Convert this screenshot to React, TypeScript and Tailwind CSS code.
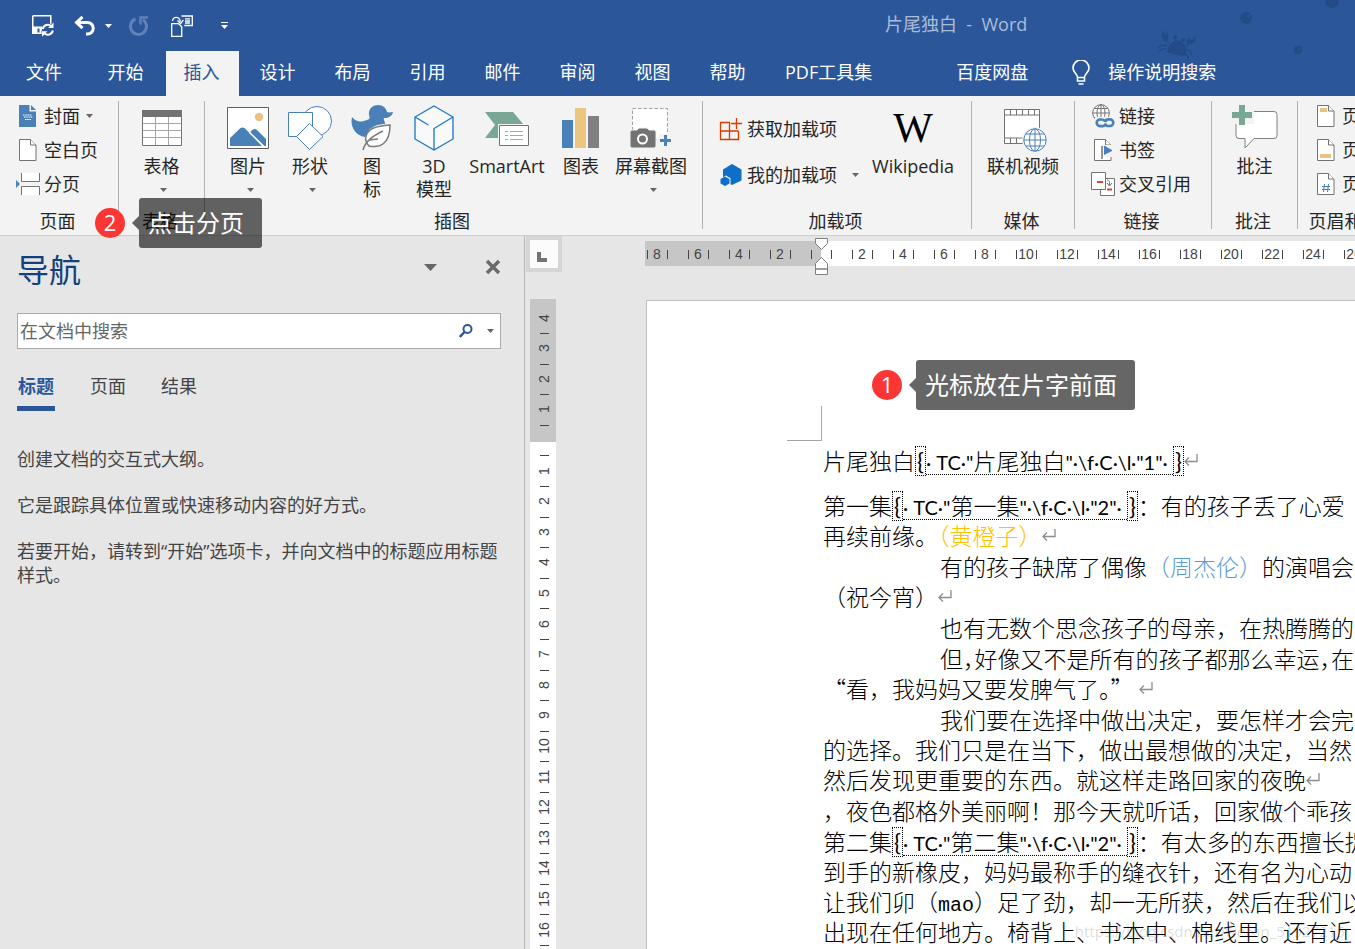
import type { ReactNode } from "react";
import clsx from "clsx";

const Caret = ({ className }: { className?: string }) => (
  <svg viewBox="0 0 7 4" className={clsx("h-1 w-[7px] shrink-0", className)} fill="currentColor">
    <path d="M0 0h7L3.5 4z" />
  </svg>
);

/* ---------- Quick access toolbar icons ---------- */

const SaveIcon = () => (
  <svg width="22" height="22" viewBox="0 0 22 22" fill="none" stroke="#fff">
    <path d="M.75.75h18v8M.75.75v17.5h9" strokeWidth="1.5" />
    <path d="M1 11.5h9v3l-1 4H1z" fill="#fff" stroke="none" />
    <path d="M5.5 13.5h2v4h-2z" fill="#2b579a" stroke="none" />
    <path d="M10.8 14a5 5 0 0 1 8.6-2.6M20.8 15.5a5 5 0 0 1-8.6 2.6" strokeWidth="2" />
    <path d="M21.5 7.5v5.5H16zM10 21.7v-5.5h5.5z" fill="#fff" stroke="none" />
  </svg>
);

const UndoIcon = () => (
  <svg width="22" height="20" viewBox="0 0 22 20" fill="none" stroke="#fff" strokeWidth="3">
    <path d="M2 6.5h11.5a5.7 5.7 0 0 1 0 11.5H12" />
    <path d="M8.5.8 2.5 6.5l6 5.7" />
  </svg>
);

const RedoIcon = () => (
  <svg width="21" height="20" viewBox="0 0 21 20" fill="none" stroke="#5f82b8" strokeWidth="3">
    <path d="M7.5 3A8 8 0 1 0 15 3.800" />
    <path d="M12.5 8.5V1.5H20" strokeWidth="2.5" />
  </svg>
);

const PasteIcon = () => (
  <svg width="22" height="22" viewBox="0 0 22 22" fill="none" stroke="#fff" strokeWidth="1.3">
    <path d="M.7 8.7h7l3 3v9.6H.7zM10.5 1H21.3v9.5h-8" />
    <path d="M14 3.8h5M14 6h5M14 8h5M1.5 6C2 1.5 8 .5 9.5 6.5M6.5 5.5l3.2 3 2.6-3.5" />
  </svg>
);

const BulbIcon = () => (
  <svg width="18" height="25" viewBox="0 0 18 25" fill="none" stroke="#fff" strokeWidth="1.6">
    <path d="M5.5 17.5c0-4-4.5-4.7-4.5-9.5a8 8 0 0 1 16 0c0 4.8-4.5 5.5-4.5 9.5zM5.5 17v4h7v-4M6.5 24h5" />
  </svg>
);

const Decoration = () => (
  <svg width="210" height="64" viewBox="0 0 210 64" fill="#234b86" className="absolute right-0 top-0">
    <circle cx="101" cy="18" r="6" />
    <circle cx="103.5" cy="16" r="1.5" fill="#2b579a" />
    <circle cx="153" cy="50" r="4" />
    <circle cx="154.5" cy="49" r="1" fill="#2b579a" />
    <circle cx="187" cy="1" r="7" />
    <path d="M22 52c2-10 8-13 13-11s8 8 5 15c-6 0-12-2-18-4z" />
    <path d="M23 43c-6-3-8-7-5-13l2 5 3-3c1 5 0 7-1 9l4 3zM42 45c7 0 10-4 8-10l-3 5-4-2c-2 4-2 6 0 8l-4 3z" />
    <circle cx="30" cy="37" r="2" />
    <circle cx="38" cy="40" r="2" />
    <path d="M22 46q-6-2-9 2M21 49q-5-1-7 3M40 50q6 0 7 5M39 53q5 2 4 7M31 42l-1-5M36 43l2-3" stroke="#234b86" strokeWidth="1.5" fill="none" />
  </svg>
);

/* ---------- Ribbon icons ---------- */

const PageShape = ({ children }: { children?: ReactNode }) => (
  <svg width="18" height="22" viewBox="0 0 18 22" fill="#fff" stroke="#737373">
    <path d="M.5.5h11l5.5 5.5v15.5H.5z" />
    <path d="M11.5.5V6H17" />
    {children}
  </svg>
);

const CoverIcon = () => (
  <svg width="18" height="22" viewBox="0 0 18 22" fill="#4a80b8">
    <path d="M0 0h10.5v6.5H17V22H0zM12 0l5 5h-5z" />
    <path d="M4 10h9M5 12h9M6 14.5h6" stroke="#fff" strokeWidth="1.2" strokeDasharray="1.5 .7" />
  </svg>
);

const BreakIcon = () => (
  <svg width="24" height="22" viewBox="0 0 24 22" fill="#fff" stroke="#737373">
    <path d="M5.5 0v8.5h18V0M5.5 22v-8.5h18V22" />
    <path d="M0 7l4 4-4 4z" fill="#4a80b8" stroke="none" />
  </svg>
);

const TableIcon = () => (
  <svg width="40" height="36" viewBox="0 0 40 36" fill="#fff">
    <path d="M.5.5h39v35H.5z" stroke="#737373" />
    <path d="M0 0h40v7H0z" fill="#737373" />
    <path d="M13.5 7v28M26.5 7v28M1 13.5h38M1 20.5h38M1 27.5h38" stroke="#a6a6a6" />
  </svg>
);

const PictureIcon = () => (
  <svg width="42" height="42" viewBox="0 0 42 42">
    <path d="M.5.5h41v41H.5z" fill="#fff" stroke="#5f5f5f" />
    <circle cx="32" cy="10" r="4.2" fill="#e9c282" />
    <path d="M3 39v-8l10.5-10q2-1 4 0L35 39z" fill="#4a80b8" />
    <path d="M23 25l3-2.5q2-1 4 .5l9 9v7h-2z" fill="#4a80b8" />
    <path d="M22.5 25.5L37 39.5" stroke="#fff" strokeWidth="1.2" />
  </svg>
);

const ShapesIcon = () => (
  <svg width="44" height="44" viewBox="0 0 44 44" fill="#fff" stroke="#4a80b8">
    <circle cx="29" cy="15" r="14.5" />
    <path d="M.5 6.5h24v24H.5z" />
    <path d="M21.5 17.5L35 30.5 21.5 43.5 8.5 30.5z" />
  </svg>
);

const DuckIcon = () => (
  <svg width="42" height="46" viewBox="0 0 42 46" fill="#4a80b8">
    <path d="M1 12c5 6 10 5 15 3 3-1 3-2 2-5C17 4 22 0 27 0c5 0 8 3 9 7 2 1 4 0 6 0-1 4-4 6-9 6-1 1 1 3 1 6-6 0-12 2-16 6-3 4-3 6-4 7C4 30-1 22 1 12z" />
    <path d="M39 20c-15 1-22 4-24 11-1 4 0 7 3 10 10 2 21-1 21-21z" fill="#fff" stroke="#7a7a7a" strokeWidth="1.5" />
    <path d="M12 45c2-8 9-14 20-19M18 35l9-1" stroke="#7a7a7a" strokeWidth="1.5" fill="none" />
  </svg>
);

const CubeIcon = () => (
  <svg width="40" height="46" viewBox="0 0 40 46" fill="#fff" fillOpacity=".5" stroke="#1a76c9" strokeWidth="1.3">
    <path d="M20 1L39 12v22L20 45 1 34V12z" />
    <path d="M1 12l13.5 8M20 45V23.5L39 12" fill="none" />
  </svg>
);

const SmartArtIcon = () => (
  <svg width="44" height="36" viewBox="0 0 44 36">
    <path d="M0 2h28l11 13L28 28H0l10-13z" fill="#78a796" />
    <path d="M13 14h31v22H13z" fill="#f3f3f3" />
    <path d="M14.5 15.5h29v20h-29z" fill="#fff" stroke="#737373" />
    <path d="M20 21.5h3M25 21.5h13M20 25.5h3M25 25.5h13M20 29.5h3M25 29.5h13" stroke="#a6a6a6" />
  </svg>
);

const ChartIcon = () => (
  <svg width="38" height="40" viewBox="0 0 38 40">
    <path d="M0 12h11v28H0z" fill="#4a80b8" />
    <path d="M13 0h11v40H13z" fill="#ecc67f" />
    <path d="M26 8h11v32H26z" fill="#808080" />
  </svg>
);

const ScreenshotIcon = () => (
  <svg width="42" height="42" viewBox="0 0 42 42">
    <path d="M2.5 1.5h35v31h-35z" fill="#fff" stroke="#a0a0a0" strokeDasharray="3.5 2" />
    <path d="M0 25q0-2 2-2h5l2-2h8l2 2h5q2 0 2 2v14q0 2-2 2H2q-2 0-2-2z" fill="#737373" stroke="#f3f3f3" />
    <circle cx="12.5" cy="32" r="4.5" fill="none" stroke="#fff" strokeWidth="2" />
    <path d="M29 27h13v12H29z" fill="#f3f3f3" />
    <path d="M30 33.5h11M35.5 28v11" stroke="#4a80b8" strokeWidth="3" />
  </svg>
);

const GetAddinsIcon = () => (
  <svg width="24" height="24" viewBox="0 0 24 24" fill="none" stroke="#d83b01" strokeWidth="1.3">
    <path d="M11 5.5H1.5v17h18V14M1.5 14h18M10.5 5.5v17M12 6.5h11M17.5 1v11" />
  </svg>
);

const MyAddinsIcon = () => (
  <svg width="22" height="22" viewBox="0 0 22 22" fill="#0f6fc6">
    <path d="M12 0l9.5 5.5v11L12 21l-1.5-.7v-6L6 11.5l-3 1.7V5.5z" />
    <path d="M5 12.5l4.5 2.5v4.5L5 22 .5 19.5V15z" />
  </svg>
);

const VideoIcon = () => (
  <svg width="48" height="50" viewBox="-4 -6 48 50" fill="#fff" stroke="#737373">
    <path d="M1.5.5h35v34h-35z" />
    <path d="M1.5 6h35M1.5 29h35M7.5.5V6M13.5.5V6M19.5.5V6M25.5.5V6M31.5.5V6M7.5 29v5.5M13.5 29v5.5M19.5 29v5.5" />
    <circle cx="32" cy="31" r="13" fill="#f3f3f3" stroke="none" />
    <g stroke="#4a80b8">
      <circle cx="32" cy="31" r="11.2" />
      <ellipse cx="32" cy="31" rx="5.5" ry="11.2" />
      <path d="M32 20v22M21 31h22M23 25h18M23 37h18" />
    </g>
  </svg>
);

const LinkIcon = () => (
  <svg width="24" height="24" viewBox="0 0 24 24" fill="none" stroke="#737373">
    <circle cx="10" cy="9" r="8.3" fill="#fff" />
    <ellipse cx="10" cy="9" rx="4" ry="8.3" />
    <path d="M10 .7v16.6M1.7 9h16.6M3 4.5h14M3 13.5h14" />
    <path d="M4 13h20v11H4z" fill="#f3f3f3" stroke="none" />
    <g stroke="#4a80b8" strokeWidth="2.6">
      <path d="M14 17.5q-1-2-3-2H9a3.3 3.3 0 0 0 0 6.6h3q2 0 3-2.5M14 20q1 2 3 2h2a3.3 3.3 0 0 0 0-6.6h-2q-2 0-3 2.5" />
    </g>
  </svg>
);

const BookmarkIcon = () => (
  <PageShape>
    <path d="M8 6h11v12H8z" fill="#f3f3f3" stroke="none" />
    <path d="M8 7v13" strokeWidth="1.5" />
    <path d="M10 6.5l9 5-9 4.5z" fill="#4a80b8" stroke="none" />
  </PageShape>
);

const CrossRefIcon = () => (
  <svg width="24" height="24" viewBox="0 0 24 24" fill="#fff" stroke="#737373">
    <path d="M9.5 6.5h14v17h-14z" />
    <path d="M.5.5h14v17H.5z" />
    <path d="M6 10h6M16 17.5h5" stroke="#d24726" strokeWidth="2" />
    <path d="M16 8q3 0 2.5 5M16 11l2.5 3 2.5-3" fill="none" />
  </svg>
);

const CommentIcon = () => (
  <svg width="46" height="46" viewBox="0 0 46 46">
    <path d="M7 6.5h35q3 0 3 3v21q0 3-3 3H22L13 43v-9.5H7q-3 0-3-3V9.5q0-3 3-3z" fill="#fff" stroke="#808080" />
    <path d="M0 3h22v16H0z" fill="#f3f3f3" />
    <path d="M0 10h20M10 0v20" stroke="#78a796" strokeWidth="6" />
  </svg>
);

/* ---------- Ribbon building blocks ---------- */

const Group = ({ label, className, children }: { label: string; className: string; children: ReactNode }) => (
  <section className={clsx("flex h-32 shrink-0 flex-col border-r border-[#b1b1b1]", className)}>
    <div className="flex h-28">{children}</div>
    <h2 className="h-4 pr-[3px] text-center leading-4 whitespace-nowrap">{label}</h2>
  </section>
);

const BigButton = ({ icon, lines, caret, className }: { icon: ReactNode; lines: string[]; caret?: boolean; className: string }) => (
  <button className={clsx("flex shrink-0 flex-col items-center pt-1", className)}>
    <span className="mb-1 flex h-[46px] items-center justify-center">{icon}</span>
    {lines.map((line) => (
      <span key={line} className="leading-[23px] whitespace-nowrap">{line}</span>
    ))}
    {caret && (
      <span className="flex h-[23px] items-center pl-1 text-[#666]">
        <Caret />
      </span>
    )}
  </button>
);

const SmallButton = ({ icon, label, caret }: { icon: ReactNode; label: string; caret?: string }) => (
  <button className="flex h-[30px] items-center gap-1 whitespace-nowrap">
    <span className="flex w-6 justify-center">{icon}</span>
    {label}
    {caret && <Caret className={clsx("text-[#666]", caret)} />}
  </button>
);

const tabs = ["开始", "插入", "设计", "布局", "引用", "邮件", "审阅", "视图", "帮助"];

const TitleBar = () => (
  <header className="relative bg-[#2b579a] text-white">
    <Decoration />
    <div className="flex h-[51px] items-center pl-8">
      <button aria-label="保存"><SaveIcon /></button>
      <button aria-label="撤消" className="ml-5"><UndoIcon /></button>
      <button aria-label="撤消列表" className="ml-[9px]"><Caret /></button>
      <button aria-label="重复" className="ml-4"><RedoIcon /></button>
      <button aria-label="粘贴" className="ml-[22px]"><PasteIcon /></button>
      <button aria-label="自定义快速访问工具栏" className="ml-7 flex flex-col gap-[2px]">
        <span className="h-px w-[7px] bg-white" />
        <Caret />
      </button>
      <h1 className="ml-auto w-[470px] pb-1 leading-6 whitespace-pre text-[#aabcd7]">{"片尾独白  -  Word"}</h1>
    </div>
    <nav className="flex h-[45px] items-stretch pb-[3px] leading-10 whitespace-nowrap">
      <button className="w-[88px]">文件</button>
      <div className="flex">
        {tabs.map((tab) => (
          <button
            key={tab}
            className={tab === "插入" ? "mr-px ml-[3px] -mb-[3px] w-[73px] bg-[#f3f3f3] pr-[2px] pb-[3px] text-[#2b579a]" : "w-[75px]"}
          >
            {tab}
          </button>
        ))}
      </div>
      <button className="px-5">PDF工具集</button>
      <button className="ml-11 px-5">百度网盘</button>
      <button className="ml-6 flex items-center gap-[18px]">
        <BulbIcon />
        操作说明搜索
      </button>
    </nav>
  </header>
);

const Ribbon = () => (
  <div className="flex h-[140px] shrink-0 overflow-hidden border-b border-[#cfcfcf] bg-[#f3f3f3] pt-[5px] text-[#262626]">
    <Group label="页面" className="w-[119px]">
      <div className="flex flex-col gap-1 pl-4">
        <SmallButton icon={<CoverIcon />} label="封面" caret="ml-[2px]" />
        <SmallButton icon={<PageShape />} label="空白页" />
        <SmallButton icon={<BreakIcon />} label="分页" />
      </div>
    </Group>
    <Group label="表格" className="w-[86px]">
      <BigButton icon={<TableIcon />} lines={["表格"]} caret className="w-full" />
    </Group>
    <Group label="插图" className="w-[498px]">
      <div className="flex pl-3">
        <BigButton icon={<PictureIcon />} lines={["图片"]} caret className="w-[62px]" />
        <BigButton icon={<ShapesIcon />} lines={["形状"]} caret className="w-[62px]" />
        <BigButton icon={<DuckIcon />} lines={["图", "标"]} className="w-[62px]" />
        <BigButton icon={<CubeIcon />} lines={["3D", "模型"]} className="w-[62px]" />
        <BigButton icon={<SmartArtIcon />} lines={["SmartArt"]} className="w-[84px]" />
        <BigButton icon={<ChartIcon />} lines={["图表"]} className="w-16" />
        <BigButton icon={<ScreenshotIcon />} lines={["屏幕截图"]} caret className="w-[76px]" />
      </div>
    </Group>
    <Group label="加载项" className="w-[269px]">
      <div className="flex w-[162px] flex-col gap-4 pt-[13px] pl-4">
        <SmallButton icon={<GetAddinsIcon />} label="获取加载项" />
        <SmallButton icon={<MyAddinsIcon />} label="我的加载项" caret="ml-[11px]" />
      </div>
      <BigButton
        icon={<span className="font-['Liberation_Serif',serif] text-[42px] text-black">W</span>}
        lines={["Wikipedia"]}
        className="w-24"
      />
    </Group>
    <Group label="媒体" className="w-[103px]">
      <BigButton icon={<VideoIcon />} lines={["联机视频"]} className="w-full" />
    </Group>
    <Group label="链接" className="w-[137px]">
      <div className="flex flex-col gap-1 pl-4">
        <SmallButton icon={<LinkIcon />} label="链接" />
        <SmallButton icon={<BookmarkIcon />} label="书签" />
        <SmallButton icon={<CrossRefIcon />} label="交叉引用" />
      </div>
    </Group>
    <Group label="批注" className="w-[86px]">
      <BigButton icon={<CommentIcon />} lines={["批注"]} className="w-full" />
    </Group>
    <Group label="页眉和页脚" className="w-[115px]">
      <div className="flex flex-col gap-1 pl-4">
        <SmallButton icon={<PageShape><path d="M3 3h7v4H3z" fill="#e9c282" stroke="none" /></PageShape>} label="页眉" />
        <SmallButton icon={<PageShape><path d="M3 15h11v4H3z" fill="#e9c282" stroke="none" /></PageShape>} label="页脚" />
        <SmallButton
          icon={<PageShape><path d="M7.5 11l-1 8M11.5 11l-1 8M5 13.5h8M5 16.5h8" stroke="#4a80b8" /></PageShape>}
          label="页码"
        />
      </div>
    </Group>
  </div>
);

const NavigationPane = () => (
  <aside className="w-[525px] shrink-0 border-r border-[#b5b5b5] pr-[23px] pl-[17px] text-[#444]">
    <div className="flex h-[68px] items-center">
      <h2 className="flex-1 text-[32px] text-[#133f7d]">导航</h2>
      <button aria-label="任务窗格选项" className="mr-12 mb-[6px] text-[#666]">
        <svg width="13" height="7" viewBox="0 0 13 7" fill="currentColor"><path d="M0 0h13L6.5 7z" /></svg>
      </button>
      <button aria-label="关闭" className="mb-[6px] text-[#6a6a6a]">
        <svg width="16" height="16" viewBox="0 0 16 16" stroke="currentColor" strokeWidth="3.5"><path d="M2 2l12 12M14 2L2 14" /></svg>
      </button>
    </div>
    <div className="mt-[9px] flex h-9 items-center border border-[#ababab] bg-white pr-[6px] pl-[2px]">
      <input
        type="text"
        aria-label="在文档中搜索"
        placeholder="在文档中搜索"
        className="min-w-0 flex-1 outline-none placeholder:text-[#666] placeholder:opacity-100"
      />
      <button aria-label="搜索">
        <svg width="14" height="14" viewBox="0 0 14 14" fill="none" stroke="#2b579a" strokeWidth="2">
          <circle cx="8.5" cy="5" r="4" />
          <path d="M5.5 8L.8 13" strokeWidth="2.5" />
        </svg>
      </button>
      <button aria-label="搜索选项" className="ml-[14px] text-[#666]"><Caret /></button>
    </div>
    <div className="mt-[22px] flex h-10 gap-[35px] leading-[30px]">
      <button className="flex w-[38px] flex-col border-b-[5px] border-[#2b579a] font-bold text-[#2b579a]">标题</button>
      <button className="flex">页面</button>
      <button className="flex">结果</button>
    </div>
    <div className="mt-9 flex flex-col gap-[22px] leading-6">
      <p>创建文档的交互式大纲。</p>
      <p>它是跟踪具体位置或快速移动内容的好方式。</p>
      <p>若要开始，请转到“开始”选项卡，并向文档中的标题应用标题样式。</p>
    </div>
  </aside>
);

/* ---------- Rulers ---------- */

const TICK = 20.5;
const ROW = 30.6;

const HorizontalRuler = () => (
  <svg className="h-[25px] w-full bg-white font-['Liberation_Sans',sans-serif]" fontSize="14" fill="#444">
    <rect width="176" height="25" fill="#c6c6c6" />
    {Array.from({ length: 60 }, (_, i) => {
      const x = Math.round(176 + (i - 8.5) * TICK);
      return <rect key={i} x={x} y="9" width="1" height="9" />;
    })}
    {Array.from({ length: 30 }, (_, i) => i - 4)
      .filter((n) => n !== 0)
      .map((n) => (
        <text key={n} x={Math.round(176 + n * 2 * TICK)} y="18" textAnchor="middle">{Math.abs(n * 2)}</text>
      ))}
  </svg>
);

const VerticalRuler = () => (
  <svg className="min-h-0 w-[26px] flex-1 bg-white font-['Liberation_Sans',sans-serif]" fontSize="14" fill="#444">
    <rect width="26" height="143" fill="#c6c6c6" />
    {Array.from({ length: 40 }, (_, i) => (
      <rect key={i} x="10" y={Math.round(34 + i * ROW)} width="9" height="1" />
    ))}
    {Array.from({ length: 40 }, (_, i) => i - 4)
      .filter((n) => n !== 0)
      .map((n) => (
        <text key={n} textAnchor="middle" transform={`translate(19 ${Math.round(141 + n * ROW)}) rotate(-90)`}>
          {Math.abs(n)}
        </text>
      ))}
  </svg>
);

const IndentMarkers = () => (
  <svg width="13" height="38" viewBox="0 0 13 38" fill="#fff" stroke="#808080" className="absolute top-[2px] left-[253px]">
    <path d="M.5.5h12v5l-6 6-6-6zM.5 31v-5.5l6-6 6 6V31zM.5 31h12v5.5H.5z" />
  </svg>
);

/* ---------- Document ---------- */

const Return = () => (
  <svg width="14" height="12" viewBox="0 0 14 12" fill="none" stroke="#8c8c8c" strokeWidth="1.3" className="mb-1 inline-block align-baseline">
    <path d="M13 0v7.5H1M5 3.5l-4 4 4 4" />
  </svg>
);

// Narrow comma, as typeset where the line has been compressed
const Comma = () => <span className="[font-feature-settings:'halt']">，</span>;

const Brace = ({ children }: { children: string }) => (
  <span className="border border-dotted border-black px-px text-[23px]">{children}</span>
);

const Field = ({ title, level }: { title: string; level: number }) => (
  <span className="font-['Lato','Noto_Sans_CJK_SC',sans-serif] text-[20px] font-normal">
    <Brace>{"{"}</Brace>
    <span className="border-b border-dotted border-black whitespace-pre">
      · TC·"<span className="text-[23px] font-light">{title}</span>"·\f·C·\l·"{level}"·{" "}
    </span>
    <Brace>{"}"}</Brace>
  </span>
);

const Line = ({ indent, children }: { indent?: boolean; children: ReactNode }) => (
  <span className={clsx("block h-[30px]", indent && "pl-[117px]")}>{children}</span>
);

const Page = () => (
  <article className="ml-[84px] flex-1 border-t border-l border-[#c0c0c0] bg-white font-['Noto_Sans_CJK_SC',sans-serif] text-[23px] leading-[30px] font-light whitespace-nowrap text-black">
    <div className="mt-[105px] ml-[140px] h-[35px] w-[35px] border-r border-b border-[#a6a6a6]" />
    <div className="mt-1 flex flex-col gap-px pl-[176px]">
      <p className="mb-[14px]">
        <Line>片尾独白<Field title="片尾独白" level={1} /><Return /></Line>
      </p>
      <p>
        <Line>第一集<Field title="第一集" level={2} />：有的孩子丢了心爱</Line>
        <Line>再续前缘。<span className="text-[#ffc000]">（黄橙子）</span><Return /></Line>
      </p>
      <p>
        <Line indent>有的孩子缺席了偶像<span className="text-[#5b9bd5]">（周杰伦）</span>的演唱会</Line>
        <Line>（祝今宵）<Return /></Line>
      </p>
      <p>
        <Line indent>也有无数个思念孩子的母亲，在热腾腾的</Line>
      </p>
      <p>
        <Line indent>但<Comma />好像又不是所有的孩子都那么幸运<Comma />在</Line>
        <Line>“看，我妈妈又要发脾气了。” <Return /></Line>
      </p>
      <p>
        <Line indent>我们要在选择中做出决定，要怎样才会完</Line>
        <Line>的选择。我们只是在当下，做出最想做的决定，当然</Line>
        <Line>然后发现更重要的东西。就这样走路回家的夜晚<Return /></Line>
      </p>
      <p>
        <Line>，夜色都格外美丽啊！那今天就听话，回家做个乖孩</Line>
      </p>
      <p>
        <Line>第二集<Field title="第二集" level={2} />：有太多的东西擅长捉</Line>
        <Line>到手的新橡皮，妈妈最称手的缝衣针，还有名为心动</Line>
        <Line>让我们卯（<span className="font-['Liberation_Mono',monospace] text-[20px]">mao</span>）足了劲，却一无所获，然后在我们以</Line>
        <Line>出现在任何地方。椅背上、书本中、棉线里。还有近</Line>
      </p>
    </div>
  </article>
);

const Callout = ({ step, text, className }: { step: number; text: string; className: string }) => (
  <div className={clsx("absolute flex items-center text-white", className)}>
    <span className="flex size-[30px] items-center justify-center rounded-full bg-[#fc3535] pb-[2px] text-[22px] leading-none">{step}</span>
    <svg width="7" height="14" viewBox="0 0 7 14" className="ml-[7px]" fill="#000" fillOpacity=".6">
      <path d="M7 0v14L0 7z" />
    </svg>
    <span className="h-[50px] rounded-[3px] bg-black/60 pr-[18px] pl-[9px] text-[24px] leading-[50px] whitespace-nowrap">{text}</span>
  </div>
);

export default function App() {
  return (
    <div className="relative flex h-screen flex-col overflow-hidden bg-[#e6e6e6] font-['Open_Sans','Noto_Sans_CJK_SC',sans-serif] text-[18px]">
      <TitleBar />
      <Ribbon />
      <main className="flex min-h-0 flex-1">
        <NavigationPane />
        <div className="flex w-[37px] shrink-0 flex-col pl-[5px]">
          <button aria-label="左对齐式制表符" className="mb-[27px] -ml-1 flex size-9 shrink-0 items-center justify-center border-4 border-[#d5d5d5] bg-[#fbfbfb] pt-[6px] pr-1">
            <svg width="10" height="10" viewBox="0 0 10 10" fill="#737373"><path d="M0 0h4v6h6v4H0z" /></svg>
          </button>
          <VerticalRuler />
        </div>
        <div className="relative flex min-w-0 flex-1 flex-col overflow-hidden">
          <div className="h-16 shrink-0 pt-[5px] pl-[83px]">
            <HorizontalRuler />
          </div>
          <IndentMarkers />
          <Page />
        </div>
      </main>
      <Callout step={2} text="点击分页" className="top-[198px] left-[95px]" />
      <Callout step={1} text="光标放在片字前面" className="top-[360px] left-[872px]" />
      <span className="absolute right-[10px] bottom-2 text-[15px] leading-5 text-black/15">https://blog.csdn.net/weixin_51927215</span>
    </div>
  );
}
